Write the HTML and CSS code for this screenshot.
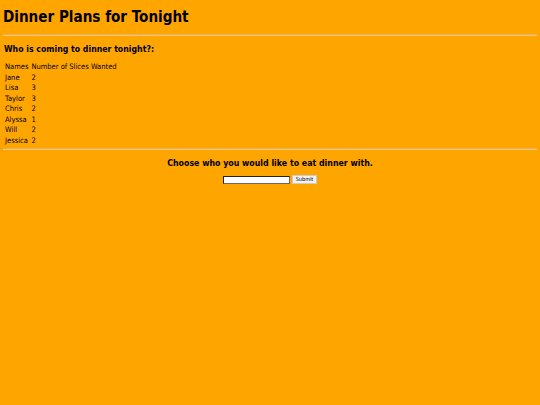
FILE: index.html
```html
<!DOCTYPE html>
<html>
<head>
<meta charset="utf-8">
<link rel="stylesheet" href="styles.css">
</head>
<body>
<h1 class="title">Dinner Plans for Tonight</h1>
<hr class="rule">
<h3 class="sub">Who is coming to dinner tonight?:</h3>
<table class="people">
<tr><td>Names</td><td>Number of Slices Wanted</td></tr>
<tr><td>Jane</td><td>2</td></tr>
<tr><td>Lisa</td><td>3</td></tr>
<tr><td>Taylor</td><td>3</td></tr>
<tr><td>Chris</td><td>2</td></tr>
<tr><td>Alyssa</td><td>1</td></tr>
<tr><td>Will</td><td>2</td></tr>
<tr><td>Jessica</td><td>2</td></tr>
</table>
<hr class="rule rule-low">
<h3 class="choose">Choose who you would like to eat dinner with.</h3>
<form class="form">
<input class="field" type="text"><button class="btn" type="button">Submit</button>
</form>
</body>
</html>
```
FILE: styles.css
```css
html, body {
  margin: 0;
  padding: 0;
  background: #ffa500;
}
body {
  padding: 0 3px;
  font-family: "DejaVu Sans Condensed", "DejaVu Sans", sans-serif;
  font-stretch: condensed;
  color: #000;
}
.title {
  font-size: 15.1px;
  font-weight: bold;
  margin: 0;
  padding-top: 8px;
  line-height: 19px;
}
.rule {
  margin: 7px 0 0 0;
  border: 0;
  border-top: 1px solid #e0b15e;
  border-bottom: 1px solid #ffc567;
  height: 0;
}
.rule-low {
  margin-top: 2px;
}
.sub {
  font-size: 8.7px;
  font-weight: bold;
  margin: 7px 0 0 1px;
  line-height: 12px;
}
.people {
  margin-top: 6px;
  border-collapse: separate;
  border-spacing: 1px;
  font-size: 7.5px;
  line-height: 9.5px;
}
.people td {
  padding: 0 1px 0 1px;
  vertical-align: middle;
}
.choose {
  font-size: 8.75px;
  font-weight: bold;
  text-align: center;
  margin: 7px 0 0 0;
  line-height: 12px;
}
.form {
  margin: 6px 0 0 0;
  display: flex;
  justify-content: center;
  align-items: center;
  gap: 2px;
}
.field {
  width: 67px;
  height: 8px;
  box-sizing: border-box;
  padding: 0;
  margin: 0;
  background: #fff;
  border: 1px solid #666;
  border-top-color: #222;
  border-left-color: #222;
}
.btn {
  font-family: "DejaVu Sans Condensed", "DejaVu Sans", sans-serif;
  font-size: 5.5px;
  padding: 0 3px;
  height: 9px;
  margin: 0;
  background: #f2f2f2;
  border: 1px solid #ccc;
  color: #000;
  line-height: 7px;
}
```
